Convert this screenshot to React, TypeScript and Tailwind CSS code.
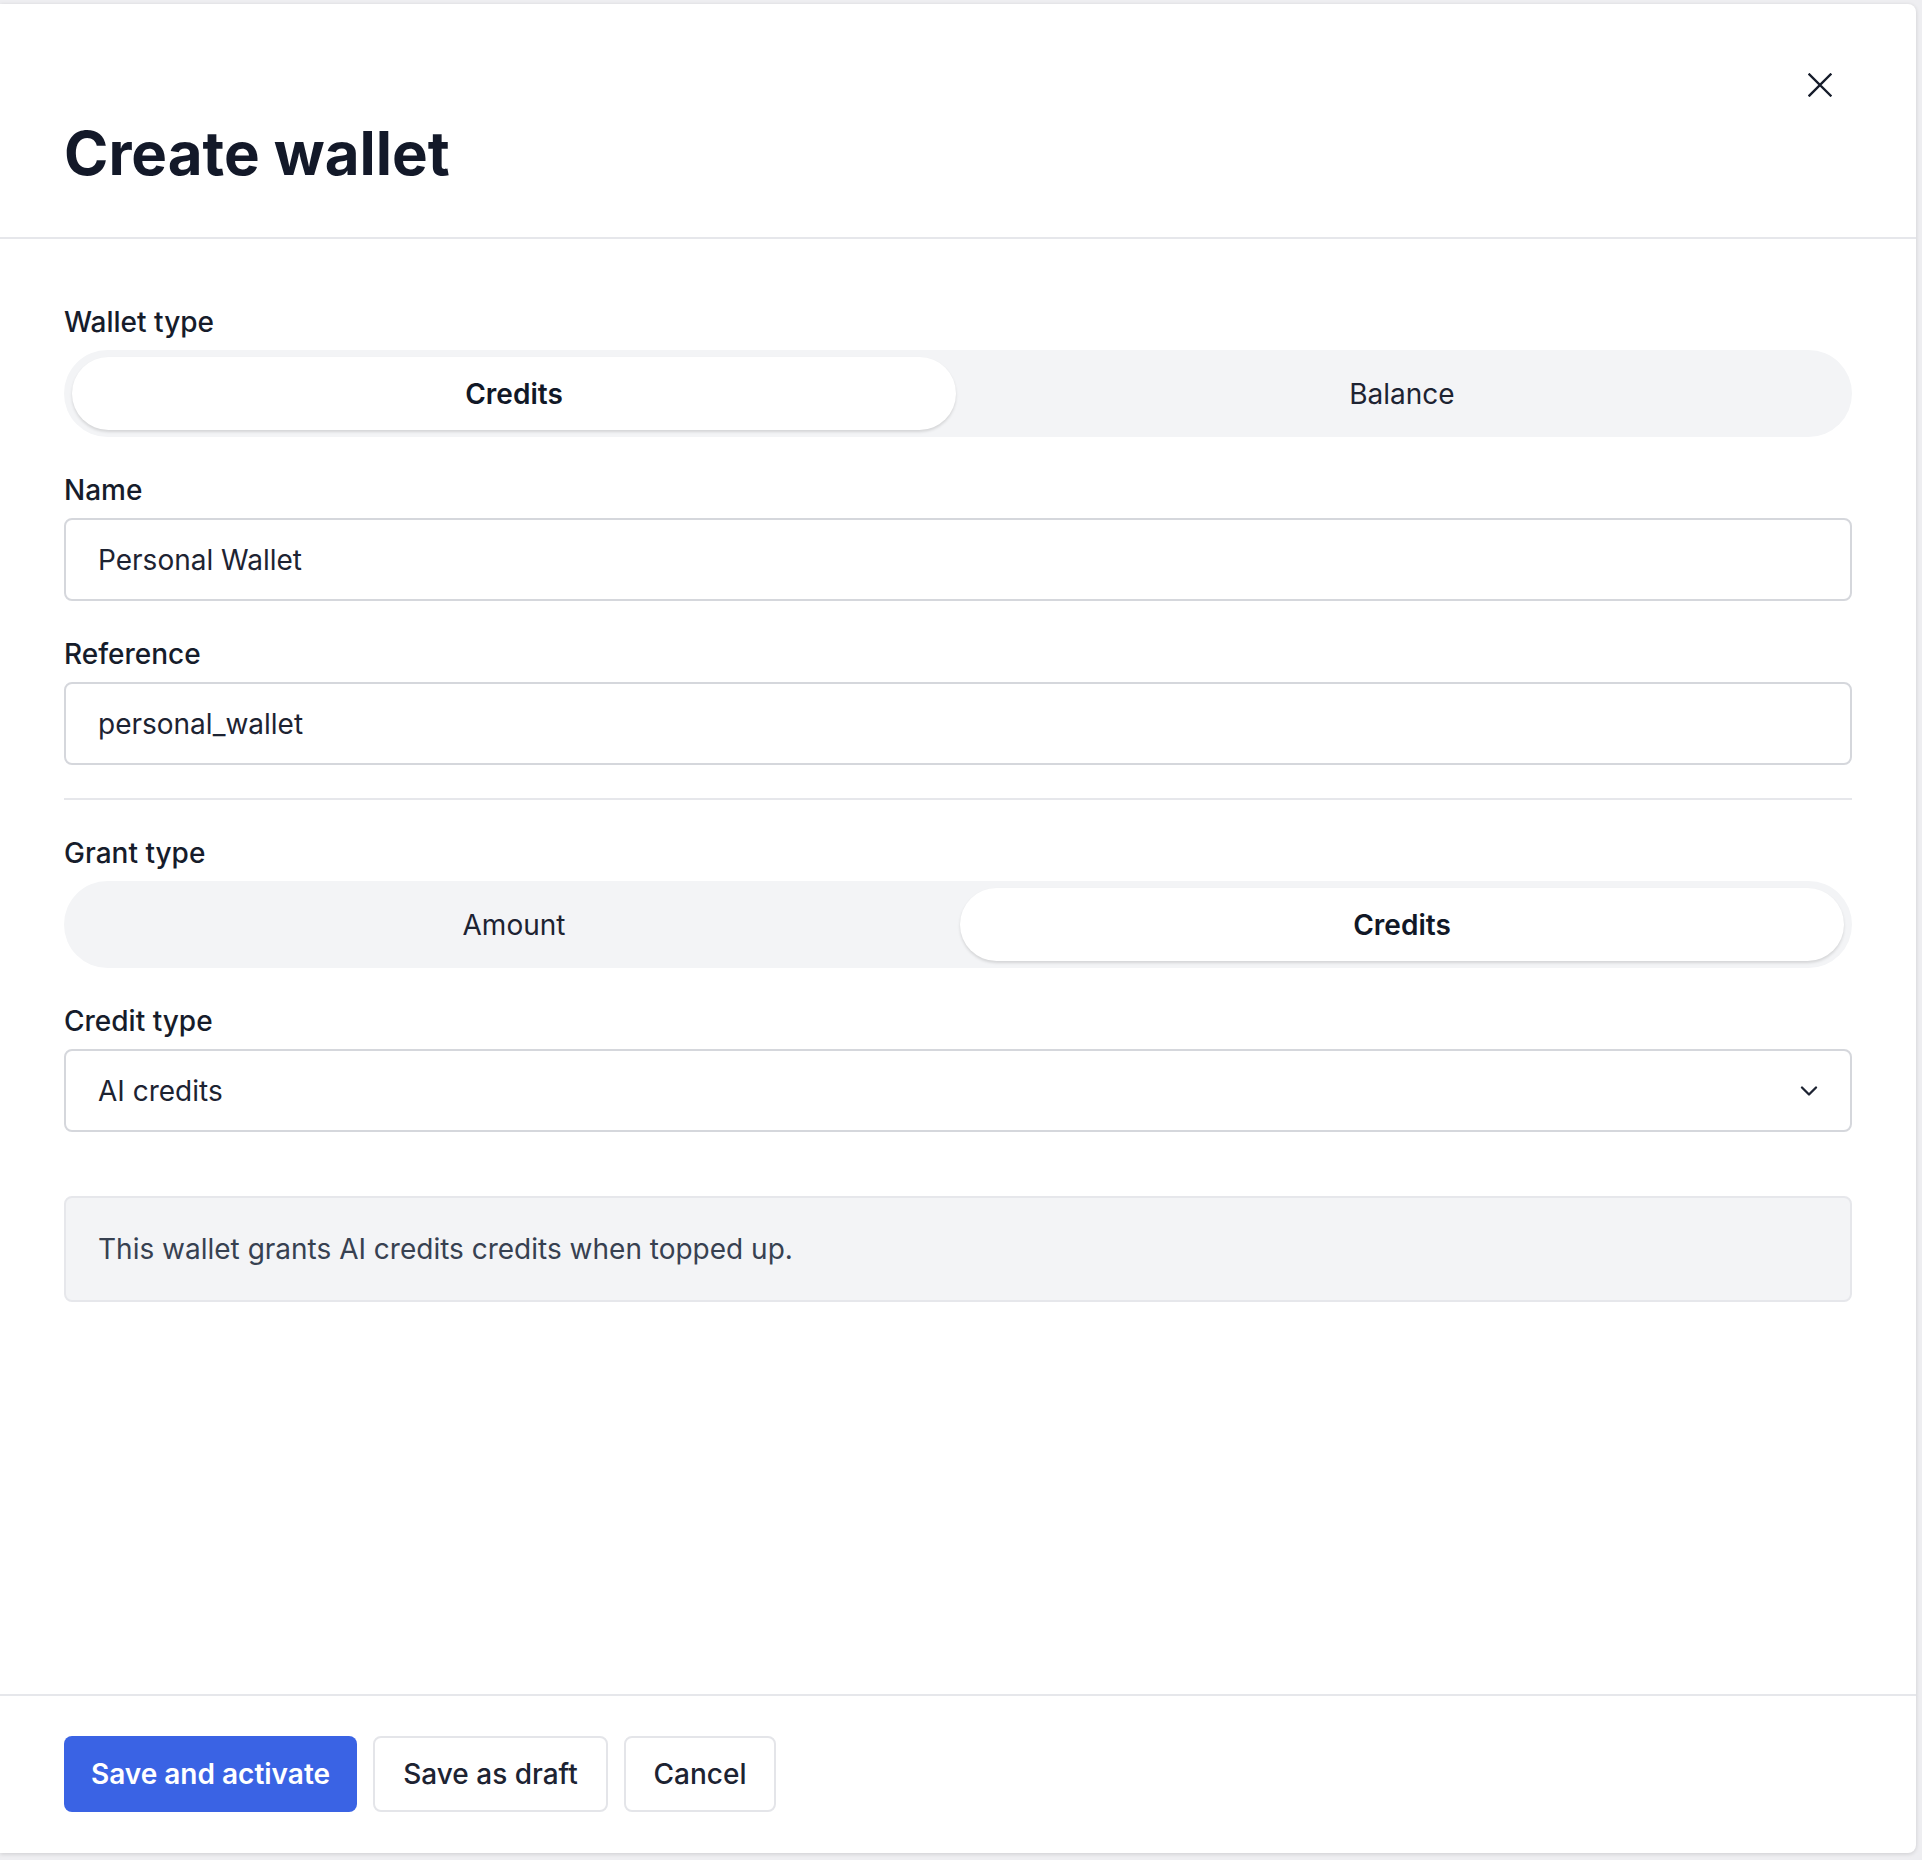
import React, { useState } from "react";

function CloseIcon() {
  return (
    <svg width="24" height="24" viewBox="0 0 24 24" fill="none" stroke="currentColor" strokeWidth="2.4" strokeLinecap="square">
      <path d="M1.5 1.5l21 21M22.5 1.5l-21 21" />
    </svg>
  );
}

function ChevronDownIcon() {
  return (
    <svg width="18" height="10" viewBox="0 0 18 10" fill="none" stroke="currentColor" strokeWidth="2.3" strokeLinecap="round" strokeLinejoin="round">
      <path d="M2 1.5l7 7 7-7" />
    </svg>
  );
}

function Label({ children }: { children: React.ReactNode }) {
  return <div className="text-[28px] leading-[40px] font-medium text-[#161c2b]">{children}</div>;
}

// Two-option pill switch; the active option sits on a white raised pill.
function Segmented({
  options,
  value,
  onChange,
}: {
  options: string[];
  value: string;
  onChange: (v: string) => void;
}) {
  return (
    <div className="grid h-[87px] grid-cols-2 gap-[4px] rounded-full bg-[#f3f4f6] px-[8px] py-[7px]">
      {options.map((opt) => {
        const active = opt === value;
        return (
          <button
            key={opt}
            type="button"
            onClick={() => onChange(opt)}
            className={
              active
                ? "flex items-center justify-center rounded-full bg-white text-[28px] font-semibold text-[#111827] shadow-[0_2px_3px_rgba(0,0,0,0.13)]"
                : "flex items-center justify-center rounded-full text-[28px] font-normal text-[#1d2332]"
            }
          >
            {opt}
          </button>
        );
      })}
    </div>
  );
}

function TextField({ label, value }: { label: string; value: string }) {
  const [v, setV] = useState(value);
  return (
    <div className="flex flex-col gap-[8px]">
      <Label>{label}</Label>
      <input
        type="text"
        value={v}
        onChange={(e) => setV(e.target.value)}
        className="h-[83px] w-full rounded-[8px] border-2 border-[#d5d7dc] bg-white px-[32px] text-[28px] text-[#1d2332] outline-none"
      />
    </div>
  );
}

export default function App() {
  const [walletType, setWalletType] = useState("Credits");
  const [grantType, setGrantType] = useState("Credits");

  return (
    <div className="min-h-[1860px] bg-[#eeeef1] pt-[4px] font-['Inter','Liberation_Sans',sans-serif]">
      <div className="flex h-[1849px] w-[1916px] flex-col rounded-r-[8px] bg-white shadow-[0_1px_4px_rgba(0,0,0,0.14)]">
        <div className="relative border-b-2 border-[#e6e7eb] px-[64px] pt-[113px] pb-[48px]">
          <h1 className="text-[60px] leading-[72px] font-bold text-[#131929]">Create wallet</h1>
          <button type="button" aria-label="Close" className="absolute top-[69px] right-[84px] text-[#161c2b]">
            <CloseIcon />
          </button>
        </div>

        <div className="flex flex-1 flex-col gap-[33px] px-[64px] pt-[63px]">
          <div className="flex flex-col gap-[8px]">
            <Label>Wallet type</Label>
            <Segmented options={["Credits", "Balance"]} value={walletType} onChange={setWalletType} />
          </div>

          <TextField label="Name" value="Personal Wallet" />
          <TextField label="Reference" value="personal_wallet" />

          <div className="h-[2px] bg-[#e6e7eb]" />

          <div className="flex flex-col gap-[8px]">
            <Label>Grant type</Label>
            <Segmented options={["Amount", "Credits"]} value={grantType} onChange={setGrantType} />
          </div>

          <div className="flex flex-col gap-[8px]">
            <Label>Credit type</Label>
            <button
              type="button"
              className="flex h-[83px] w-full items-center justify-between rounded-[8px] border-2 border-[#d5d7dc] bg-white pr-[32px] pl-[32px] text-left text-[28px] text-[#1d2332]"
            >
              <span>AI credits</span>
              <span className="text-[#1d2332]">
                <ChevronDownIcon />
              </span>
            </button>
          </div>

          <div className="mt-[31px] flex h-[106px] items-center rounded-[8px] border-2 border-[#e6e7eb] bg-[#f3f4f6] px-[32px] text-[28px] text-[#374151]">
            This wallet grants AI credits credits when topped up.
          </div>
        </div>

        <div className="flex items-center gap-[16px] border-t-2 border-[#e6e7eb] px-[64px] pt-[40px] pb-[41px]">
          <button
            type="button"
            className="flex h-[76px] w-[293px] items-center justify-center rounded-[8px] bg-[#3a63e4] text-[28px] font-semibold text-white"
          >
            Save and activate
          </button>
          <button
            type="button"
            className="flex h-[76px] w-[235px] items-center justify-center rounded-[8px] border-2 border-[#e4e5e9] bg-white text-[28px] font-medium text-[#1d2332]"
          >
            Save as draft
          </button>
          <button
            type="button"
            className="flex h-[76px] w-[152px] items-center justify-center rounded-[8px] border-2 border-[#e4e5e9] bg-white text-[28px] font-medium text-[#1d2332]"
          >
            Cancel
          </button>
        </div>
      </div>
    </div>
  );
}
